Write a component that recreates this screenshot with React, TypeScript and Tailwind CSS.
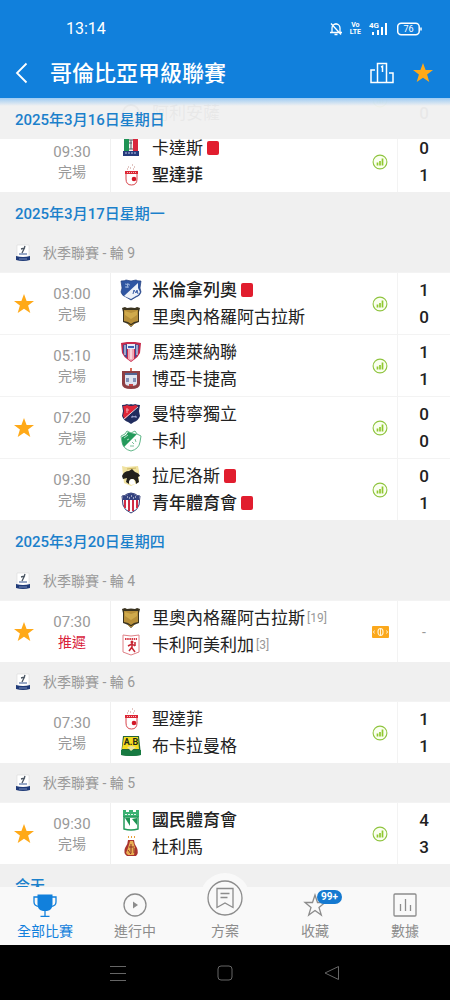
import type { ReactNode } from 'react'
import { clsx } from 'clsx'

interface Team {
  name: string
  crest: string
  score?: number
  bold?: boolean
  redCard?: boolean
  rank?: number
}

interface Match {
  time: string
  status: string
  postponed?: boolean
  favorite?: boolean
  home: Team
  away: Team
}

interface Section {
  date?: string
  round?: string
  matches: Match[]
}

const sections: Section[] = [
  {
    matches: [
      {
        time: '',
        status: '',
        home: { name: '', crest: '' },
        away: { name: '阿利安薩', crest: 'alianza', score: 0 },
      },
      {
        time: '09:30',
        status: '完場',
        home: { name: '卡達斯', crest: 'caldas', score: 0, redCard: true },
        away: { name: '聖達菲', crest: 'santafe', score: 1, bold: true },
      },
    ],
  },
  {
    date: '2025年3月17日星期一',
    round: '秋季聯賽 - 輪 9',
    matches: [
      {
        time: '03:00',
        status: '完場',
        favorite: true,
        home: { name: '米倫拿列奧', crest: 'millonarios', score: 1, bold: true, redCard: true },
        away: { name: '里奧內格羅阿古拉斯', crest: 'aguilas', score: 0 },
      },
      {
        time: '05:10',
        status: '完場',
        home: { name: '馬達萊納聯', crest: 'magdalena', score: 1 },
        away: { name: '博亞卡捷高', crest: 'chico', score: 1 },
      },
      {
        time: '07:20',
        status: '完場',
        favorite: true,
        home: { name: '曼特寧獨立', crest: 'medellin', score: 0 },
        away: { name: '卡利', crest: 'cali', score: 0 },
      },
      {
        time: '09:30',
        status: '完場',
        home: { name: '拉尼洛斯', crest: 'llaneros', score: 0, redCard: true },
        away: { name: '青年體育會', crest: 'junior', score: 1, bold: true, redCard: true },
      },
    ],
  },
  {
    date: '2025年3月20日星期四',
    round: '秋季聯賽 - 輪 4',
    matches: [
      {
        time: '07:30',
        status: '推遲',
        postponed: true,
        favorite: true,
        home: { name: '里奧內格羅阿古拉斯', crest: 'aguilas', rank: 19 },
        away: { name: '卡利阿美利加', crest: 'america', rank: 3 },
      },
    ],
  },
  {
    round: '秋季聯賽 - 輪 6',
    matches: [
      {
        time: '07:30',
        status: '完場',
        home: { name: '聖達菲', crest: 'santafe', score: 1 },
        away: { name: '布卡拉曼格', crest: 'bucaramanga', score: 1 },
      },
    ],
  },
  {
    round: '秋季聯賽 - 輪 5',
    matches: [
      {
        time: '09:30',
        status: '完場',
        favorite: true,
        home: { name: '國民體育會', crest: 'nacional', score: 4, bold: true },
        away: { name: '杜利馬', crest: 'tolima', score: 3 },
      },
    ],
  },
  { date: '今天', matches: [] },
]

const crests: Record<string, ReactNode> = {
  alianza: <circle cx="11" cy="11" r="8" fill="none" stroke="#444" strokeWidth="2" />,
  caldas: (
    <>
      <path d="M4 2h5v12H4z" fill="#1f9355" />
      <path d="M9 2h4v12H9z" fill="#f5f5f5" />
      <path d="M13 2h5v12h-5z" fill="#d9263c" />
      <path d="M9 3h4M11 3v9M9 6h3M9 12h4" stroke="#54565f" fill="none" />
      <path d="M3 14h16v5H3z" fill="#263b7c" />
      <path d="M5 16h12" stroke="#b9c3e8" strokeDasharray="2 1" />
    </>
  ),
  santafe: (
    <>
      <path d="M8 3h1M12 1h1M10 4h1M14 3h1M7 5h1M13 5h1" stroke="#c58a83" />
      <path d="M6 8h11v7q0 6-5.500 6T6 15z" fill="#fff" stroke="#d8454c" />
      <path d="M5 7h13v3H5z" fill="#dc2735" />
      <path d="M7 8.500h9" stroke="#f7b9bd" strokeDasharray="1 1" />
      <circle cx="14" cy="15" r="2.300" fill="#d31727" />
    </>
  ),
  millonarios: (
    <>
      <path d="M1 2q4 0 5-1l5 1 5-1q1 1 5 1l-1 7 1 4q-1 4-5 5l-5 3-5-3q-4-1-5-5l1-4z" fill="#2f56a2" stroke="#1f3c7c" strokeWidth=".7" />
      <path d="M18 4 4 17l7 3 5-3q3-1 4-4l-2-4z" fill="#eef2f8" />
      <path d="M5 5l5 1M5 8h4M8 4l-1 5" stroke="#9db5dd" />
      <path d="M13 15l1-4 2 3 1-3 1 4" stroke="#3b5fa8" fill="none" />
    </>
  ),
  aguilas: (
    <>
      <path d="M2 2l3-1 2 1q4-1 8 0l2-1 3 1-1 4v10q-3 1-5 2l-3 3-3-3q-2-1-5-2V6z" fill="#3a3320" />
      <path d="M4 4h14v11l-4 1-3 2-3-2-4-1z" fill="#b8903a" />
      <path d="M5 5l6 2 6-2v4l-6 4-6-4z" fill="#d0aa4c" />
      <path d="M8 18l3 2 3-2" stroke="#b8903a" fill="none" />
    </>
  ),
  magdalena: (
    <>
      <path d="M1 2l6-1h8l6 1-1 10q-2 4-5 6l-4 3-4-3q-3-2-5-6z" fill="#c72a4c" />
      <path d="M3 4l4-1v14q-3-2-4-6zM15 3l4 1-1 7q-1 4-3 6z" fill="#3d4f96" />
      <path d="M7 3h8v5H7z" fill="#e7edf8" />
      <path d="M8 8h6v10l-3 2-3-2z" fill="#f0a7b5" />
      <path d="M5 4v10M17 4v10M11 8v10" stroke="#fff" />
      <path d="M8 6h6" stroke="#3d62b4" strokeWidth="2" />
    </>
  ),
  chico: (
    <>
      <path d="M10 0h2v3h-2z" fill="#d96a55" />
      <path d="M2 3h18v13q0 5-9 5t-9-5z" fill="#8e3f43" />
      <path d="M5 6h12v9q0 3-6 3t-6-3z" fill="#dfe5f1" />
      <path d="M5 5h12v2H5z" fill="#526593" />
      <path d="M6 10h3v4H6zM13 10h3v4h-3z" fill="#8292b7" />
      <path d="M9 17h4" stroke="#c84444" strokeWidth="2" />
    </>
  ),
  medellin: (
    <>
      <path d="M2 2q3 0 5-1 2 1 4 0 2 1 4 0 2 1 5 1l-1 6 1 5q-2 5-6 6l-3 2-3-2q-4-1-6-6l1-5z" fill="#202c5e" />
      <path d="M3 3q3 0 4-1 2 1 4 1 3 0 4-1l3 1L5 16l-2-3 1-5z" fill="#df2638" />
      <path d="M18 4 4 16" stroke="#fff" strokeWidth=".8" />
      <path d="M6 7h3M7 5v5" stroke="#f8a7ae" />
      <path d="M12 15v-2l2 1 2-1v2" stroke="#aab2dc" fill="none" />
    </>
  ),
  cali: (
    <>
      <path d="M1 6l4-2 2-3 4 2 4-2 2 3 4 2-1 6q-1 7-9 9-8-2-9-9z" fill="#fff" stroke="#61b789" />
      <path d="M2 7l4-2 2-3 3 1 6 1L4 17q-2-3-2-6z" fill="#259a5b" />
      <path d="M4 8l4-3M7 10l2-1" stroke="#b2dfc6" />
      <path d="M12 12l2 2M15 9l1 3M10 16h4" stroke="#7cc29b" />
    </>
  ),
  llaneros: (
    <>
      <path d="M2 1l4 1 12-1 1 5v11l-8 4-7-3z" fill="#f0e2a0" />
      <path d="M2 11q2-5 7-5l3-2 3 3q4 1 5 4l-2 1 1 5-3 2q0-5-4-5-3 1-3 5l-3-2 1-4-4 1z" fill="#22201c" />
      <path d="M7 4l9-1" stroke="#cbb55f" />
      <path d="M9 18q0-4 3-4t3 5l-4 1z" fill="#fff" />
    </>
  ),
  junior: (
    <>
      <path d="M2 4q3 0 5-2l4-1 4 1q2 2 5 2l-1 9q-1 5-8 8-7-3-8-8z" fill="#fff" stroke="#313c77" />
      <path d="M5 8v8M9 8v11M13 8v11M17 8v8" stroke="#d02e47" strokeWidth="2" />
      <path d="M3 4q3 0 5-2l3-1 3 1q2 2 5 2v4H3z" fill="#34427f" />
      <path d="M7 5h1M11 4h1M15 5h1M9 6h1M13 6h1" stroke="#fff" />
    </>
  ),
  america: (
    <>
      <path d="M3 1l8 1 8-1v17l-8 3-8-3z" fill="#fff" stroke="#df8288" />
      <path d="M5 5h12" stroke="#d83a45" strokeWidth="2" strokeDasharray="1.500 .7" />
      <circle cx="12" cy="8" r="1.500" fill="#c62432" />
      <path d="M12 9v5l3 4M12 13l-3 4M12 10l-4 2M12 10l3 2M15 8v4" stroke="#c62432" strokeWidth="1.500" fill="none" />
    </>
  ),
  bucaramanga: (
    <>
      <path d="M3 1h16l2 19q-10 2-20 0z" fill="#22633a" />
      <path d="M4 2h14l1 12H2z" fill="#f4dd21" />
      <path d="M1 15h20v5q-10 2-20 0z" fill="#177a41" />
      <path d="M7 12l4 4 5-4-5-1z" fill="#e8e4a0" />
      <text x="11" y="10" fontSize="9" fontWeight="700" textAnchor="middle" fill="#1c2a18">A.B</text>
    </>
  ),
  nacional: (
    <>
      <path d="M3 1h3v2h3V1h4v2h3V1h3v7H3z" fill="#3bb273" />
      <path d="M4 8h14v12q-7 2-14 0z" fill="#fff" stroke="#259b5c" strokeWidth="1.500" />
      <path d="M5 9l5 8V9zM12 10l5 6V9z" fill="#1d9453" />
      <path d="M5 5.500h12" stroke="#e2f5ea" strokeDasharray="2 1" />
    </>
  ),
  tolima: (
    <>
      <path d="M8 1h1M11 1h1M14 1h1" stroke="#e7a03a" strokeWidth="2" />
      <path d="M8 4h6q0 4 3 8 2 5-1 8H7q-4-3-2-8 3-4 3-8z" fill="#a9342f" />
      <path d="M10 5h3l2 7-1 7H8l-2-2 2-5z" fill="#e9ae52" />
      <path d="M9 11h5M11 8v9M8 14l3 4M14 12v5" stroke="#8d2f22" fill="none" />
    </>
  ),
}

function Crest({ id }: { id: string }) {
  return (
    <svg viewBox="0 0 22 22" className="h-[22px] w-[22px] shrink-0" aria-hidden="true">
      {crests[id]}
    </svg>
  )
}

function StarIcon({ className }: { className?: string }) {
  return (
    <svg viewBox="0 0 22 22" className={className} aria-hidden="true">
      <path d="M11 1l2.600 7H21l-5.900 4.600L17.300 20 11 15.700 4.700 20l2.200-7.400L1 8h7.400z" fill="#ffa918" />
    </svg>
  )
}

function LeagueIcon() {
  return (
    <svg viewBox="0 0 16 18" className="h-[18px] w-4" aria-hidden="true">
      <path d="M2 1h12v15H2z" fill="#fff" stroke="#dadada" strokeWidth=".6" />
      <path d="M10 2l-1 3M6 5l4-1M9 5l-2 4" stroke="#4b5663" strokeWidth="1.300" fill="none" />
      <path d="M4 10h8" stroke="#33538f" />
      <path d="M1 12q7 2 14 0v4q-7 2-14 0z" fill="#1f3a78" />
      <path d="M4 15h8" stroke="#8fa2cc" strokeWidth=".8" />
    </svg>
  )
}

function StatsIcon() {
  return (
    <svg viewBox="0 0 16 16" className="h-4 w-4" aria-hidden="true">
      <circle cx="8" cy="8" r="6.900" fill="#fafff0" stroke="#8fc43f" strokeWidth="1.100" />
      <path d="M5.500 8.500V11.500M8 7v4.500M10.500 4.500v7" stroke="#8fc82f" strokeWidth="1.700" />
    </svg>
  )
}

function TicketIcon() {
  return (
    <svg viewBox="0 0 17 12" className="h-3 w-[17px]" aria-hidden="true">
      <rect width="17" height="12" rx="1" fill="#fba81c" />
      <ellipse cx="8.500" cy="6" rx="2.500" ry="3.500" fill="none" stroke="#fff3d5" strokeWidth="1.200" />
      <path d="M8.500 2v8M2.500 4.500L1.500 6l1 1.500M14.500 4.500l1 1.500-1 1.500" stroke="#fff3d5" fill="none" />
    </svg>
  )
}

function TeamLine({ team }: { team: Team }) {
  return (
    <div className="flex h-[27px] items-center">
      <Crest id={team.crest} />
      <span className={clsx('ml-[10px] text-[17px] leading-[27px] whitespace-nowrap text-[#222]', team.bold && 'font-medium')}>
        {team.name}
      </span>
      {team.redCard && <span className="ml-1 h-[14px] w-3 rounded-xs bg-[#e11d2e]" />}
      {team.rank && <span className="ml-[2px] text-xs text-[#999]">[{team.rank}]</span>}
    </div>
  )
}

function MatchRow({ match }: { match: Match }) {
  const played = match.home.score !== undefined || match.away.score !== undefined

  return (
    <li className="flex h-[62px] border-t border-[#f3f3f3] bg-white">
      <div className="flex w-[111px] shrink-0 items-center border-r border-[#f0f0f0]">
        <div className="flex w-12 justify-center">
          {match.favorite && (
            <button type="button" aria-label="收藏">
              <StarIcon className="h-[22px] w-[22px]" />
            </button>
          )}
        </div>
        <div className="w-12 text-center leading-5 text-[#999]">
          <div className="text-[15px] leading-5">{match.time}</div>
          <div className={clsx('text-sm', match.postponed && 'text-[#d9213a]')}>{match.status}</div>
        </div>
      </div>
      <div className="flex min-w-0 flex-1 flex-col justify-center pl-[9px]">
        <TeamLine team={match.home} />
        <TeamLine team={match.away} />
      </div>
      <div className="flex w-[34px] shrink-0 items-center justify-center">
        {played ? <StatsIcon /> : <TicketIcon />}
      </div>
      <div className="flex w-[53px] shrink-0 flex-col justify-center border-l border-[#f3f3f3] text-center text-[17px] leading-[27px] font-medium text-[#222]">
        {played ? (
          <>
            <span className="h-[27px]">{match.home.score}</span>
            <span className="h-[27px]">{match.away.score}</span>
          </>
        ) : (
          <span className="text-sm font-normal text-[#999]">-</span>
        )}
      </div>
    </li>
  )
}

function DateHeader({ children }: { children: ReactNode }) {
  return (
    <h2 className="flex h-[41px] items-center px-[15px] pt-[3px] text-[15px] font-medium text-[#1b80cb]">
      {children}
    </h2>
  )
}

function StatusBar() {
  return (
    <div className="flex h-12 items-center justify-between pt-[10px] pr-7 pl-[66px]">
      <span className="text-base">13:14</span>
      <div className="flex items-center gap-2">
        {/* Muted bell */}
        <svg viewBox="0 0 12 14" className="h-[14px] w-3" fill="none" stroke="currentColor" strokeWidth="1.300">
          <path d="M2 10V6a4 4 0 0 1 8 0v4M0 10.500h12M4.500 12.500h3M6 1v1M1 1.500l10 11" />
        </svg>
        <div className="flex flex-col text-center text-[7px] leading-[7px] font-bold">
          <span>Vo</span>
          <span>LTE</span>
        </div>
        <svg viewBox="0 0 20 14" className="h-[14px] w-5" fill="currentColor">
          <text x="0" y="6" fontSize="8" fontWeight="700">4G</text>
          <path d="M3 10h2v3H3zM8 8h2v5H8zM12 5h2v8h-2zM16 1h2v12h-2z" />
        </svg>
        <svg viewBox="0 0 25 14" className="h-[14px] w-[25px]" fill="none" stroke="currentColor">
          <rect x=".7" y="1.200" width="21.500" height="11.500" rx="3.500" strokeWidth="1.500" />
          <path d="M24 5.500v3" strokeWidth="1.500" />
          <text x="11.500" y="10.200" fontSize="9" textAnchor="middle" fill="currentColor" stroke="none">76</text>
        </svg>
      </div>
    </div>
  )
}

function Header() {
  return (
    <header className="shrink-0 bg-[#1180dc] text-white">
      <StatusBar />
      <div className="flex h-[50px] items-center pr-4 pl-[15px]">
        <button type="button" aria-label="返回">
          <svg viewBox="0 0 14 22" className="h-[22px] w-[14px]" fill="none" stroke="currentColor" strokeWidth="1.800">
            <path d="M11.500 1.500L2 11l9.500 9.500" />
          </svg>
        </button>
        <h1 className="ml-[21px] flex-1 text-[22px] font-medium">哥倫比亞甲級聯賽</h1>
        <button type="button" aria-label="排名">
          <svg viewBox="0 0 24 22" className="h-[22px] w-6" fill="none" stroke="currentColor" strokeWidth="1.500">
            <path d="M7.500 20.500v-19h9v19M5 8H1v12.500h22V11h-4M11 5l1.500-.7V10" />
          </svg>
        </button>
        <button type="button" aria-label="收藏聯賽" className="ml-[18px]">
          <StarIcon className="h-[22px] w-[22px]" />
        </button>
      </div>
    </header>
  )
}

interface TabProps {
  label: string
  active?: boolean
  badge?: string
  children: ReactNode
}

function Tab({ label, active, badge, children }: TabProps) {
  return (
    <a
      href="#"
      aria-current={active ? 'page' : undefined}
      className={clsx('relative flex flex-col items-center gap-1 pt-[6px]', active ? 'text-[#1180dc]' : 'text-[#8c8c8c]')}
    >
      <span className="relative flex h-6 items-center justify-center">
        {children}
        {badge && (
          <span className="absolute -top-[3px] left-[14px] rounded-full bg-[#1479d0] px-1 text-[10px] leading-[14px] font-bold text-white">
            {badge}
          </span>
        )}
      </span>
      <span className="relative text-sm">{label}</span>
    </a>
  )
}

function BottomNav() {
  return (
    <nav className="relative z-10 grid h-[58px] shrink-0 grid-cols-5 bg-[#f9f9f9]">
      <Tab label="全部比賽" active>
        <svg viewBox="0 0 24 24" className="h-6 w-6" fill="none" stroke="currentColor" strokeWidth="1.300">
          <path d="M4.500 1.500h15V11q0 6-5.500 7h-4q-5.500-1-5.500-7z" fill="currentColor" stroke="none" />
          <path d="M5 4H1V9q0 4 5 4.500M19 4h4V9q0 4-5 4.500M12 17v6M7.500 23.300h9" />
        </svg>
      </Tab>
      <Tab label="進行中">
        <svg viewBox="0 0 24 24" className="h-6 w-6" fill="none" stroke="currentColor" strokeWidth="1.300">
          <circle cx="12" cy="12" r="11" />
          <path d="M10 8.500v7l5-3.500z" fill="currentColor" stroke="none" />
        </svg>
      </Tab>
      <Tab label="方案">
        {/* Raised disc over the list */}
        <span className="absolute -top-5 flex h-[50px] w-[50px] items-center justify-center rounded-full bg-[#f9f9f9]">
          <svg viewBox="0 0 36 36" className="h-9 w-9" fill="none" stroke="currentColor" strokeWidth="1.300">
            <circle cx="18" cy="18" r="17" />
            <path d="M10 8.500h16v19l-8-4.500-8 4.500zM13.500 13.500h9M13.500 17.500h7" />
          </svg>
        </span>
      </Tab>
      <Tab label="收藏" badge="99+">
        <svg viewBox="0 0 24 24" className="h-6 w-6" fill="none" stroke="currentColor" strokeWidth="1.300">
          <path d="M12 2l2.500 7.500H22l-6 5 2.300 7.500-6.300-4.500L5.700 22 8 14.500l-6-5h7.500z" />
        </svg>
      </Tab>
      <Tab label="數據">
        <svg viewBox="0 0 24 24" className="h-6 w-6" fill="none" stroke="currentColor" strokeWidth="1.300">
          <rect x="1" y="1" width="22" height="22" rx="1" />
          <path d="M7.500 11v7M12.500 6v12M17.500 12v6" />
        </svg>
      </Tab>
    </nav>
  )
}

function SystemBar() {
  return (
    <div className="grid h-[55px] shrink-0 grid-cols-3 place-items-center bg-black px-16 text-[#666]">
      <button type="button" aria-label="最近使用">
        <svg viewBox="0 0 16 16" className="h-4 w-4" stroke="currentColor">
          <path d="M0 1.500h16M0 8.500h16M0 15.500h16" />
        </svg>
      </button>
      <button type="button" aria-label="主頁">
        <svg viewBox="0 0 16 16" className="h-4 w-4" fill="none" stroke="currentColor">
          <rect x="1" y="1" width="14" height="14" rx="3" />
        </svg>
      </button>
      <button type="button" aria-label="返回上頁">
        <svg viewBox="0 0 16 16" className="h-4 w-4" fill="none" stroke="currentColor" strokeLinejoin="round">
          <path d="M14.500 1.500v13L1 8z" />
        </svg>
      </button>
    </div>
  )
}

export default function App() {
  return (
    <div className="flex h-screen flex-col bg-[#f0f0f0] font-['Roboto','Noto_Sans_CJK_TC',sans-serif]">
      <Header />
      <main className="relative min-h-0 flex-1 overflow-hidden">
        {/* Pinned date of the section being scrolled */}
        <div className="absolute inset-x-0 top-0 z-10 bg-[#f0f0f0]/96">
          <div className="absolute inset-x-0 top-0 h-2 bg-gradient-to-b from-[#9dcbf3] to-transparent" />
          <DateHeader>2025年3月16日星期日</DateHeader>
        </div>

        <div className="-mt-[30px]">
          {sections.map((section, i) => (
            <section key={i}>
              {section.date && <DateHeader>{section.date}</DateHeader>}
              {section.round && (
                <h3 className="flex h-[39px] items-center gap-3 px-[15px] text-sm text-[#999]">
                  <LeagueIcon />
                  {section.round}
                </h3>
              )}
              <ul>
                {section.matches.map((match, j) => (
                  <MatchRow key={j} match={match} />
                ))}
              </ul>
            </section>
          ))}
        </div>
      </main>
      <BottomNav />
      <SystemBar />
    </div>
  )
}
